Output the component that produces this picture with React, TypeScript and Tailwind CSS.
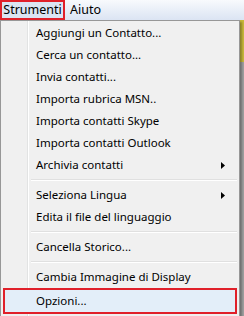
import React from "react";

const font = { fontFamily: '"Segoe UI", "Noto Sans", "Open Sans", sans-serif' };

function Item({ label, arrow }: { label: string; arrow?: boolean }) {
  return (
    <div className="flex h-[22px] items-center pl-[35px] pr-[14px] text-[11.5px] text-black">
      <span className="flex-1 whitespace-nowrap">{label}</span>
      {arrow && (
        <svg width="4" height="7" viewBox="0 0 4 7">
          <path d="M0 0 L4 3.5 L0 7 Z" fill="#000" />
        </svg>
      )}
    </div>
  );
}

function Sep() {
  return (
    <div className="flex h-[8px] items-center pl-[30px] pr-[2px]">
      <div className="h-[2px] w-full border-t border-[#e0e0e0] border-b-white bg-white" />
    </div>
  );
}

export default function App() {
  return (
    <div className="relative h-[316px] w-[244px] overflow-hidden bg-[#f0f0f0]" style={font}>
      <div className="flex h-[20px] items-stretch bg-gradient-to-b from-[#f8fafd] to-[#dbe4f3] text-[12.5px]">
        <div className="flex w-[65px] items-center justify-center border-2 border-[#e0202a] bg-[#dbe4f3]">Strumenti</div>
        <div className="flex items-center px-[5px]">Aiuto</div>
      </div>
      <div className="flex">
        <div className="relative w-[240px] border border-[#979797] bg-[#f0f0f0] pb-[2px] pt-[1px] shadow-[2px_2px_2px_rgba(0,0,0,0.3)]">
          <div className="absolute bottom-0 left-[26px] top-0 w-[2px] border-l border-[#e2e3e3] bg-white" />
          <div className="relative">
            <Item label="Aggiungi un Contatto..." />
            <Item label="Cerca un contatto..." />
            <Item label="Invia contatti..." />
            <Item label="Importa rubrica MSN.." />
            <Item label="Importa contatti Skype" />
            <Item label="Importa contatti Outlook" />
            <Item label="Archivia contatti" arrow />
            <Sep />
            <Item label="Seleziona Lingua" arrow />
            <Item label="Edita il file del linguaggio" />
            <Sep />
            <Item label="Cancella Storico..." />
            <Sep />
            <Item label="Cambia Immagine di Display" />
            <div className="mx-[2px] flex h-[26px] items-center border-2 border-[#e0202a] bg-[#e3eef9] pl-[31px] text-[11.5px]">
              Opzioni...
            </div>
          </div>
        </div>
        <div className="flex w-[4px] flex-col">
          <div className="h-[42px] bg-[#c8b93a]" />
          <div className="flex-1 bg-[#a0a0a0]" />
        </div>
      </div>
    </div>
  );
}
